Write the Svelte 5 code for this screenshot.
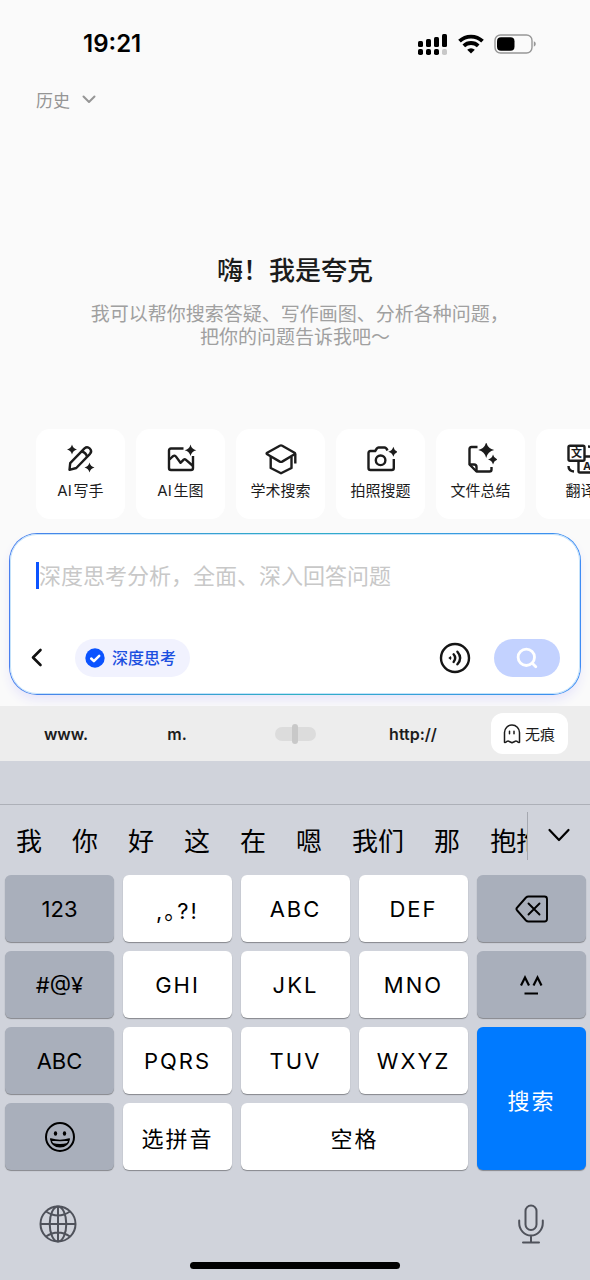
<script>
    let question = ''
    let deepThinking = true
    let cursorPosition = 50

    const tools = [
        { icon: 'writer', label: 'AI写手' },
        { icon: 'image', label: 'AI生图' },
        { icon: 'study', label: '学术搜索' },
        { icon: 'camera', label: '拍照搜题' },
        { icon: 'file', label: '文件总结' },
        { icon: 'translate', label: '翻译' }
    ]

    const candidates = ['我', '你', '好', '这', '在', '嗯', '我们', '那', '抱抱']

    const keys = [
        { label: '123', type: 'dark' },
        { label: ',。?!', type: 'light' },
        { label: 'ABC', type: 'light' },
        { label: 'DEF', type: 'light' },
        { icon: 'delete', name: '删除', type: 'dark' },
        { label: '#@¥', type: 'dark' },
        { label: 'GHI', type: 'light' },
        { label: 'JKL', type: 'light' },
        { label: 'MNO', type: 'light' },
        { icon: 'face', name: '颜文字', type: 'dark' },
        { label: 'ABC', type: 'dark' },
        { label: 'PQRS', type: 'light' },
        { label: 'TUV', type: 'light' },
        { label: 'WXYZ', type: 'light' },
        { label: '搜索', type: 'submit' },
        { icon: 'emoji', name: '表情', type: 'dark' },
        { label: '选拼音', type: 'light' },
        { label: '空格', type: 'light wide' }
    ]

    // four-pointed star around x, y
    function star(x, y, r) {
        const c = r * 0.18
        return `M${x} ${y - r}Q${x + c} ${y - c} ${x + r} ${y}Q${x + c} ${y + c} ${x} ${y + r}Q${x - c} ${y + c} ${x - r} ${y}Q${x - c} ${y - c} ${x} ${y - r}Z`
    }
</script>

<div class='page'>
    <header class='status-bar'>
        <span class='time'>19:21</span>
        <div class='status-icons'>
            <svg width='30' height='22' viewBox='0 0 30 22' aria-hidden='true'>
                <rect x='0' y='8' width='5' height='6' rx='1.5'/>
                <rect x='8' y='6' width='5' height='8' rx='1.5'/>
                <rect x='16' y='4' width='5' height='10' rx='1.5'/>
                <rect x='24' y='1' width='5' height='13' rx='1.5'/>
                <rect x='0' y='16' width='5' height='6' rx='1.8'/>
                <rect x='8' y='16' width='5' height='6' rx='1.8'/>
                <rect x='16' y='16' width='5' height='6' rx='1.8'/>
                <rect x='24' y='16' width='5' height='6' rx='1.8' fill='#c8c8c8'/>
            </svg>
            <svg width='26' height='20' viewBox='0 0 26 20' fill='none' stroke='#000' stroke-width='3.8' aria-hidden='true'>
                <path d='M1.5 7.2a16.6 16.6 0 0 1 23 0'/>
                <path d='M5.8 11.9a10.4 10.4 0 0 1 14.4 0'/>
                <path d='M13 19.5l-3.8-3.8a5.4 5.4 0 0 1 7.600 0z' fill='#000' stroke='none'/>
            </svg>
            <svg width='42' height='20' viewBox='0 0 42 20' aria-hidden='true'>
                <rect x='1' y='1' width='37' height='18' rx='5.5' fill='none' stroke='#979797' stroke-width='1.4'/>
                <rect x='3' y='3.2' width='17.5' height='13.6' rx='4'/>
                <path d='M39.8 7.3q2 .8 2 2.7t-2 2.7z' fill='#979797'/>
            </svg>
        </div>
    </header>

    <nav class='top-nav'>
        <button class='history'>
            历史
            <svg width='14' height='10' viewBox='0 0 14 10' fill='none' stroke='#959595' stroke-width='2' stroke-linecap='round' stroke-linejoin='round' aria-hidden='true'>
                <path d='M1.5 2.500L7 8L12.5 2.500'/>
            </svg>
        </button>
    </nav>

    <main>
        <section class='hero'>
            <h1>嗨！我是夸克</h1>
            <p>我可以帮你搜索答疑、写作画图、分析各种问题<span class='half'>，</span><br>把你的问题告诉我吧～</p>
        </section>

        <div class='tools'>
            {#each tools as tool}
                <button class='tool'>
                    <svg width='32' height='32' viewBox='0 0 32 32' fill='none' stroke='#1c1c1c' stroke-width='2.4' stroke-linejoin='round' aria-hidden='true'>
                        {#if tool.icon === 'writer'}
                            <path d='M4.500 26.800L5.200 20.200L19.500 5.300a3.900 3.900 0 0 1 5.500 5.500L11.300 25z'/>
                            <path d='M16.500 8.500q4.500 1 5.400 5'/>
                            <path d={star(7, 6.5, 5)} fill='#1c1c1c' stroke='none'/>
                            <path d={star(24.5, 24.5, 5)} fill='#1c1c1c' stroke='none'/>
                        {:else if tool.icon === 'image'}
                            <path d='M18.500 5.500H6q-2 0-2 2V25q0 2 2 2H26q2 0 2-2V13'/>
                            <path d='M4.500 16.500l3.500-3.300q1.700-1.400 3 .4l4.500 6.200 3.200-3.200q1-.8 2 0L28 23'/>
                            <path d={star(25.5, 7.3, 5.8)} fill='#1c1c1c' stroke='none'/>
                        {:else if tool.icon === 'study'}
                            <path d='M14.800 2.700q1.200-.6 2.400 0L29.500 9.700q1.200.8 0 1.600l-12.300 7.300q-1.200.6-2.400 0L2.200 11.300q-1.200-.8 0-1.600z'/>
                            <path d='M5.700 14V25l10.300 5.300L26.500 25V14M30.300 10.700v9.800'/>
                        {:else if tool.icon === 'camera'}
                            <path d='M22.500 7.500q-1.300-3-3-3h-6q-1 0-1.700 1L10.200 8H5.500Q3.500 8 3.500 10v15q0 2 2 2h21.300q2 0 2-2v-9'/>
                            <circle cx='15.600' cy='17.300' r='4.800'/>
                            <path d={star(28.3, 8.8, 5)} fill='#1c1c1c' stroke='none'/>
                        {:else if tool.icon === 'file'}
                            <path d='M12.500 4H6.500Q4.500 4 4.500 6v15.500l7 7H24.500q2 0 2-2V24'/>
                            <path d='M4.500 21.500h4.500q2.500 0 2.500 2.500v4.500'/>
                            <path d={star(21.2, 7, 8)} fill='#1c1c1c' stroke='none'/>
                            <path d={star(28, 16.5, 5)} fill='#1c1c1c' stroke='none'/>
                        {:else}
                            <rect x='3.500' y='2.800' width='16' height='15' rx='1.500'/>
                            <path d='M20 13.500h9q1.500 0 1.500 1.500v13q0 1.500-1.500 1.500H15q-1.500 0-1.500-1.500V18M3.500 23q0 5 5.500 5.500M23 3.500q5 0 6 5.500'/>
                            <text x='11.500' y='14' class='glyph'>文</text>
                            <text x='22' y='27' class='glyph'>A</text>
                        {/if}
                    </svg>
                    <span>{tool.label}</span>
                </button>
            {/each}
        </div>

        <form class='ask' on:submit|preventDefault>
            <div class='ask-text'>
                <span class='caret'></span>
                <textarea rows='2' aria-label='问题' placeholder='深度思考分析，全面、深入回答问题' bind:value={question}></textarea>
            </div>
            <div class='ask-controls'>
                <button type='button' class='back' aria-label='返回'>
                    <svg width='12' height='20' viewBox='0 0 12 20' fill='none' stroke='#111' stroke-width='2.6' stroke-linecap='round' stroke-linejoin='round'>
                        <path d='M9.5 2L2 9.500L9.5 17'/>
                    </svg>
                </button>
                <label class='deep'>
                    <input type='checkbox' bind:checked={deepThinking}>
                    <svg width='20' height='20' viewBox='0 0 20 20' aria-hidden='true'>
                        <circle cx='10' cy='10' r='9.7' fill='#0b53ff'/>
                        <path d='M6.2 10.5l2.7 2.6 5.3-5.3' fill='none' stroke='#fff' stroke-width='2.5' stroke-linecap='round' stroke-linejoin='round'/>
                    </svg>
                    深度思考
                </label>
                <button type='button' class='voice' aria-label='语音'>
                    <svg width='32' height='32' viewBox='0 0 32 32' fill='none' stroke='#151515' stroke-width='2.4' stroke-linecap='round'>
                        <circle cx='16' cy='16' r='14'/>
                        <path d='M14.6 12.3q3.2 3.7 0 7.6M18.4 9.7q5.5 6.3 0 12.6'/>
                        <path d='M9.3 16l2.4-2q1.6 2 0 4z' fill='#151515' stroke='none'/>
                    </svg>
                </button>
                <button type='submit' class='search' aria-label='搜索'>
                    <svg width='24' height='24' viewBox='0 0 24 24' fill='none' stroke='#fff' stroke-width='2.8' stroke-linecap='round'>
                        <circle cx='11.3' cy='11.3' r='8.2'/>
                        <path d='M17.8 17.8l3 3'/>
                    </svg>
                </button>
            </div>
        </form>
    </main>

    <div class='shortcuts'>
        <button class='shortcut first'>www.</button>
        <button class='shortcut'>m.</button>
        <input class='slider' type='range' min='0' max='100' aria-label='移动光标' bind:value={cursorPosition}>
        <button class='shortcut'>http://</button>
        <button class='private'>
            <svg width='18' height='20' viewBox='0 0 18 20' fill='none' stroke='#1c1c1c' stroke-width='1.5' stroke-linejoin='round' aria-hidden='true'>
                <path d='M1.5 18.3V8.5a7.5 7.5 0 0 1 15 0v9.8q-1.3.5-2.5-1-1.2-.8-2.2.2L9 18.8l-2.8-1.3q-1-1-2.2-.2-1.200 1.5-2.5 1z'/>
                <path d='M6.5 7.3v2.4M11 7.3v2.4' stroke-linecap='round'/>
            </svg>
            无痕
        </button>
    </div>

    <div class='keyboard'>
        <div class='candidates'>
            <div class='words'>
                {#each candidates as word}
                    <button>{word}</button>
                {/each}
            </div>
            <button class='expand' aria-label='展开'>
                <svg width='24' height='16' viewBox='0 0 24 16' fill='none' stroke='#000' stroke-width='2.2' stroke-linecap='round' stroke-linejoin='round'>
                    <path d='M2.500 2L12 12L21.500 2'/>
                </svg>
            </button>
        </div>

        <div class='keys'>
            {#each keys as key}
                <button class='key {key.type}' aria-label={key.name}>
                    {#if key.icon === 'delete'}
                        <svg width='34' height='28' viewBox='0 0 34 28' fill='none' stroke='#000' stroke-width='1.9' stroke-linecap='round' stroke-linejoin='round'>
                            <path d='M13.5 1.5H29.500q2.500 0 2.500 2.500v20q0 2.500-2.500 2.500H13.5q-1.500 0-2.500-1L2.2 15.500q-1.500-1.500 0-3L11 2.500q1-1 2.500-1z'/>
                            <path d='M13.500 8.5l11 11M24.500 8.5l-11 11'/>
                        </svg>
                    {:else if key.icon === 'face'}
                        <svg width='24' height='22' viewBox='0 0 24 22' fill='none' stroke='#000' stroke-width='2.2'>
                            <path d='M1 11.5L5 3.500L9 11.5M13.500 11.5L17.500 3.500L21.500 11.5M4.500 19.500h13.500'/>
                        </svg>
                    {:else if key.icon === 'emoji'}
                        <svg width='32' height='32' viewBox='0 0 32 32' fill='none' stroke='#000' stroke-width='2'>
                            <circle cx='16' cy='16' r='14'/>
                            <ellipse cx='11.5' cy='12.5' rx='1.7' ry='2.2' fill='#000' stroke='none'/>
                            <ellipse cx='20.5' cy='12.5' rx='1.7' ry='2.2' fill='#000' stroke='none'/>
                            <path d='M6.7 18q9.3 3 18.6 0-1.3 7.8-9.3 7.8T6.7 18z' stroke-width='1.5' stroke-linejoin='round'/>
                            <path d='M8.5 22q7.5 2 15 0-2 3.8-7.5 3.8T8.5 22z' fill='#000' stroke='none'/>
                        </svg>
                    {:else}
                        {key.label}
                    {/if}
                </button>
            {/each}
        </div>

        <div class='keyboard-footer'>
            <button aria-label='切换键盘'>
                <svg width='38' height='38' viewBox='0 0 38 38' fill='none' stroke='#4f525b' stroke-width='2'>
                    <circle cx='19' cy='19' r='17.5'/>
                    <ellipse cx='19' cy='19' rx='8.3' ry='17.5'/>
                    <path d='M19 1.5v35M1.5 19h35M7 6.5q12 8 24 0M7 31.5q12-8 24 0'/>
                </svg>
            </button>
            <button aria-label='语音输入'>
                <svg width='28' height='40' viewBox='0 0 28 40' fill='none' stroke='#4f525b' stroke-width='2' stroke-linecap='round'>
                    <rect x='8.5' y='1.5' width='11' height='24.5' rx='5.5'/>
                    <path d='M2.2 16.5V19a11.8 12.5 0 0 0 23.6 0v-2.5M14 31.5v7M6 38.5h16'/>
                </svg>
            </button>
        </div>
        <div class='home-indicator'></div>
    </div>
</div>

<style>
    :global(body) {
        margin: 0;
        background-color: #fafafa;
    }

    .page {
        display: flex;
        flex-direction: column;
        min-height: 100vh;
        overflow: hidden;
        background-color: #fafafa;
        color: #1c1c1c;
        font-family: Inter, 'Noto Sans CJK SC', sans-serif;
    }

    button {
        display: flex;
        align-items: center;
        justify-content: center;
        padding: 0;
        border: none;
        background: none;
        color: inherit;
        font: inherit;
        cursor: pointer;
    }

    svg {
        flex-shrink: 0;
    }

    .status-bar {
        display: flex;
        align-items: center;
        justify-content: space-between;
        height: 72px;
        padding: 15px 54px 0 83px;
        box-sizing: border-box;
        color: #000;
    }

    .time {
        font-size: 24px;
        font-weight: 600;
        line-height: 28px;
    }

    .status-icons {
        display: flex;
        align-items: center;
        gap: 10px;
    }

    .top-nav {
        display: flex;
        padding: 0 36px;
    }

    .history {
        gap: 12px;
        height: 54px;
        margin-bottom: 2px;
        color: #959595;
        font-size: 17px;
    }

    main {
        display: flex;
        flex-direction: column;
        flex: 1;
    }

    .hero {
        padding: 125px 24px 80px;
        text-align: center;
    }

    .hero h1 {
        margin: 0 0 14px;
        font-size: 26px;
        font-weight: 500;
        line-height: 36px;
    }

    .hero p {
        margin: 0;
        color: #a0a0a0;
        font-size: 19px;
        line-height: 23px;
    }

    .half {
        font-feature-settings: 'halt';
    }

    .tools {
        display: flex;
        gap: 11px;
        padding: 0 36px;
        overflow-x: auto;
        scrollbar-width: none;
    }

    .tool {
        flex: 0 0 89px;
        flex-direction: column;
        justify-content: flex-start;
        gap: 5px;
        height: 90px;
        padding-top: 14px;
        border-radius: 14px;
        background-color: #fff;
        font-size: 15px;
        line-height: 22px;
        text-autospace: normal;
    }

    .glyph {
        fill: #1c1c1c;
        stroke: none;
        font-size: 11px;
        font-weight: 700;
        text-anchor: middle;
    }

    .ask {
        margin: 14px 9px 11px;
        padding: 28px 20px 17px 26px;
        border: 1px solid transparent;
        border-radius: 28px;
        background:
            linear-gradient(#fff, #fff) padding-box,
            linear-gradient(90deg, #4a7ff0, #2fb0c4 50%, #3f8cf5) border-box;
        box-shadow:
            inset 0 0 0 1px #c4e2fa,
            0 6px 12px -2px #e4e2fa;
    }

    .ask-text {
        display: flex;
        margin-bottom: 21px;
    }

    .caret {
        width: 3px;
        height: 27px;
        background-color: #0b53ff;
    }

    textarea {
        flex: 1;
        display: block;
        height: 56px;
        padding: 0;
        border: none;
        outline: none;
        resize: none;
        background: none;
        font-family: inherit;
        font-size: 22px;
        line-height: 28px;
    }

    textarea::placeholder {
        color: #c8c8c8;
    }

    .ask-controls {
        display: flex;
        align-items: center;
        height: 38px;
    }

    .back {
        width: 12px;
        height: 38px;
        margin-left: -5px;
    }

    .deep {
        display: flex;
        align-items: center;
        gap: 7px;
        height: 38px;
        margin-left: 32px;
        padding: 0 14px 0 10px;
        border-radius: 19px;
        background-color: #f1f2fe;
        color: #1b4fe0;
        font-size: 16px;
        font-weight: 500;
        line-height: 38px;
        cursor: pointer;
    }

    .deep input {
        appearance: none;
        width: 0;
        height: 0;
        margin: 0 -7px 0 0;
    }

    .voice {
        margin-left: auto;
    }

    .search {
        width: 66px;
        height: 38px;
        margin-left: 23px;
        border-radius: 19px;
        background-color: #c3d2ff;
    }

    .shortcuts {
        display: grid;
        grid-template-columns: repeat(5, 1fr);
        align-items: center;
        justify-items: center;
        height: 55px;
        background-color: #ededed;
    }

    .shortcut {
        font-size: 16px;
        font-weight: 600;
    }

    .shortcut.first {
        padding-left: 14px;
    }

    .slider {
        appearance: none;
        width: 41px;
        height: 14px;
        margin: 0;
        border-radius: 7px;
        background-color: #dcdcdc;
    }

    .slider::-webkit-slider-thumb {
        appearance: none;
        width: 6px;
        height: 20px;
        border-radius: 3px;
        background-color: #c8c8c8;
    }

    .private {
        gap: 4px;
        width: 77px;
        height: 41px;
        margin-right: 4px;
        border-radius: 12px;
        background-color: #fff;
        font-size: 15px;
    }

    .keyboard {
        padding-top: 43px;
        background-color: #d0d3db;
        color: #000;
    }

    .candidates {
        display: flex;
        align-items: center;
        height: 70px;
        border-top: 1px solid #adb0b8;
    }

    .words {
        display: flex;
        flex: 1;
        gap: 30px;
        min-width: 0;
        height: 48px;
        margin-bottom: 8px;
        padding: 12px 0 0 16px;
        box-sizing: border-box;
        overflow: hidden;
        border-right: 1px solid #a5a8b0;
        font-size: 26px;
        line-height: 36px;
    }

    .words button {
        flex-shrink: 0;
    }

    .expand {
        width: 62px;
        height: 48px;
        margin-bottom: 8px;
    }

    .keys {
        display: grid;
        grid-template-columns: repeat(5, 1fr);
        grid-auto-rows: 67px;
        gap: 9px;
        padding: 0 4px 0 5px;
    }

    .key {
        border-radius: 6px;
        background-color: #fff;
        box-shadow: 0 1px 1px #85878c;
        font-size: 22px;
        font-feature-settings: 'halt';
    }

    .key.light,
    .key.submit {
        letter-spacing: 2px;
    }

    .key.dark {
        background-color: #a9afbb;
    }

    .key.submit {
        grid-row: span 2;
        background-color: #007aff;
        color: #fff;
    }

    .key.wide {
        grid-column: span 2;
    }

    .keyboard-footer {
        display: flex;
        align-items: center;
        justify-content: space-between;
        margin-top: 34px;
        padding: 0 45px 0 39px;
    }

    .home-indicator {
        width: 210px;
        height: 7px;
        margin: 18px auto 11px;
        border-radius: 4px;
        background-color: #000;
    }
</style>
